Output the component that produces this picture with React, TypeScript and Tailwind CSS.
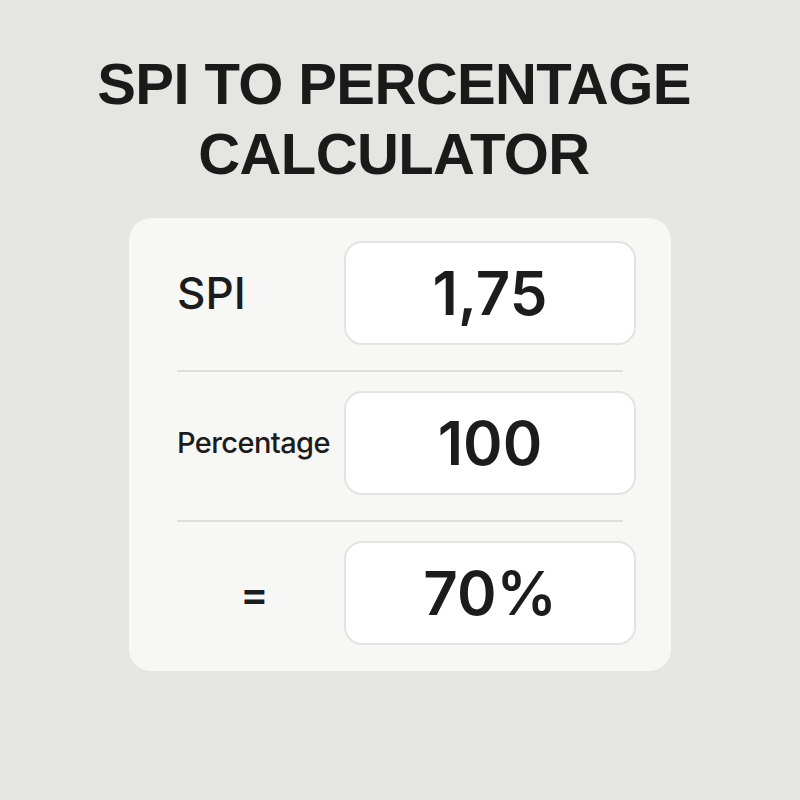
import React from 'react';

const ROWS = [
  { label: 'SPI', value: '1,75', labelClass: 'text-[44px] font-medium' },
  { label: 'Percentage', value: '100', labelClass: 'text-[29px] font-medium tracking-[-0.6px]' },
  { label: '=', value: '70%', labelClass: 'text-[42px] font-semibold text-center pr-[12px]' },
];

const App: React.FC = () => {
  return (
    <div className="w-[800px] h-[800px] bg-[#e5e5e2] flex flex-col items-center font-['Inter',sans-serif] text-[#1c1c1c]">
      <h1 className="mt-[49px] pr-[12px] text-center font-['Liberation_Sans',Arial,sans-serif] font-bold text-[58px] leading-[70px] tracking-[-0.6px] text-[#1a1a1a]">
        SPI TO PERCENTAGE
        <br />
        CALCULATOR
      </h1>
      <div className="mt-[29px] w-[542px] bg-[#f7f7f6] rounded-[22px] pl-[48px] pr-[35px] pt-[23px] pb-[26px]">
        {ROWS.map((row, i) => (
          <div key={row.label}>
            {i > 0 && <div className="h-[2px] bg-[#dededc] mt-[25px] mb-[19px] mr-[13px]" />}
            <div className="flex items-center">
              <div className={`w-[167px] ${row.labelClass}`}>{row.label}</div>
              <div className="flex-1 h-[104px] bg-white border-2 border-[#e3e3e1] rounded-[18px] flex items-center justify-center text-[60px] font-semibold">
                {row.value}
              </div>
            </div>
          </div>
        ))}
      </div>
    </div>
  );
};

export default App;
